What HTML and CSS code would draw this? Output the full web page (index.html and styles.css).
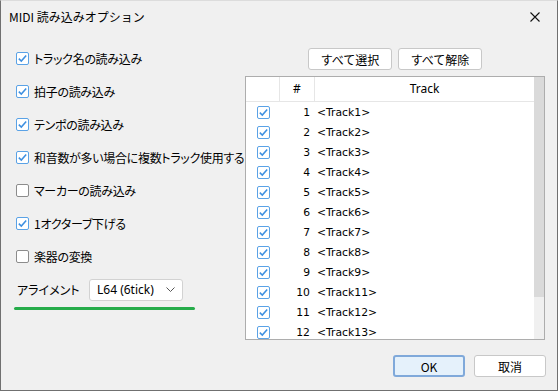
FILE: index.html
```html
<!DOCTYPE html>
<html lang="ja">
<head>
  <meta charset="UTF-8">
  <title>MIDI 読み込みオプション</title>
  <link rel="stylesheet" href="styles.css">
</head>
<body>
<div class="dialogo">
  <div class="titulo">
    <span>MIDI 読み込みオプション</span>
    <svg class="fechar" width="10" height="10" viewBox="0 0 10 10"><path d="M0.5 0.5L9.5 9.5M9.5 0.5L0.5 9.5" stroke="#111" stroke-width="1.1"/></svg>
  </div>

  <div class="corpo">
    <div class="opcoes">
      <label class="opcao"><span class="caixa marcada"><svg viewBox="0 0 11 11"><path d="M1.8 5.6L4.3 8.1L9.2 2.6"/></svg></span>トラック名の読み込み</label>
      <label class="opcao"><span class="caixa marcada"><svg viewBox="0 0 11 11"><path d="M1.8 5.6L4.3 8.1L9.2 2.6"/></svg></span>拍子の読み込み</label>
      <label class="opcao"><span class="caixa marcada"><svg viewBox="0 0 11 11"><path d="M1.8 5.6L4.3 8.1L9.2 2.6"/></svg></span>テンポの読み込み</label>
      <label class="opcao"><span class="caixa marcada"><svg viewBox="0 0 11 11"><path d="M1.8 5.6L4.3 8.1L9.2 2.6"/></svg></span>和音数が多い場合に複数トラック使用する</label>
      <label class="opcao"><span class="caixa"></span>マーカーの読み込み</label>
      <label class="opcao"><span class="caixa marcada"><svg viewBox="0 0 11 11"><path d="M1.8 5.6L4.3 8.1L9.2 2.6"/></svg></span>1オクターブ下げる</label>
      <label class="opcao"><span class="caixa"></span>楽器の変換</label>
      <div class="alinhamento">
        <span>アライメント</span>
        <div class="seletor">L64 (6tick)
          <svg width="9" height="5" viewBox="0 0 9 5"><path d="M0.5 0.5L4.5 4.5L8.5 0.5" fill="none" stroke="#555"/></svg>
        </div>
      </div>
      <div class="sublinhado"></div>
    </div>

    <div class="faixas">
      <div class="acoes">
        <button class="botao">すべて選択</button>
        <button class="botao">すべて解除</button>
      </div>
      <div class="tabela">
        <div class="lista">
          <div class="cabecalho">
            <div class="c1"></div>
            <div class="c2">#</div>
            <div class="c3">Track</div>
          </div>
          <div class="linha"><div class="c1"><span class="caixa marcada"><svg viewBox="0 0 11 11"><path d="M1.8 5.6L4.3 8.1L9.2 2.6"/></svg></span></div><div class="c2">1</div><div class="c3">&lt;Track1&gt;</div></div>
          <div class="linha"><div class="c1"><span class="caixa marcada"><svg viewBox="0 0 11 11"><path d="M1.8 5.6L4.3 8.1L9.2 2.6"/></svg></span></div><div class="c2">2</div><div class="c3">&lt;Track2&gt;</div></div>
          <div class="linha"><div class="c1"><span class="caixa marcada"><svg viewBox="0 0 11 11"><path d="M1.8 5.6L4.3 8.1L9.2 2.6"/></svg></span></div><div class="c2">3</div><div class="c3">&lt;Track3&gt;</div></div>
          <div class="linha"><div class="c1"><span class="caixa marcada"><svg viewBox="0 0 11 11"><path d="M1.8 5.6L4.3 8.1L9.2 2.6"/></svg></span></div><div class="c2">4</div><div class="c3">&lt;Track4&gt;</div></div>
          <div class="linha"><div class="c1"><span class="caixa marcada"><svg viewBox="0 0 11 11"><path d="M1.8 5.6L4.3 8.1L9.2 2.6"/></svg></span></div><div class="c2">5</div><div class="c3">&lt;Track5&gt;</div></div>
          <div class="linha"><div class="c1"><span class="caixa marcada"><svg viewBox="0 0 11 11"><path d="M1.8 5.6L4.3 8.1L9.2 2.6"/></svg></span></div><div class="c2">6</div><div class="c3">&lt;Track6&gt;</div></div>
          <div class="linha"><div class="c1"><span class="caixa marcada"><svg viewBox="0 0 11 11"><path d="M1.8 5.6L4.3 8.1L9.2 2.6"/></svg></span></div><div class="c2">7</div><div class="c3">&lt;Track7&gt;</div></div>
          <div class="linha"><div class="c1"><span class="caixa marcada"><svg viewBox="0 0 11 11"><path d="M1.8 5.6L4.3 8.1L9.2 2.6"/></svg></span></div><div class="c2">8</div><div class="c3">&lt;Track8&gt;</div></div>
          <div class="linha"><div class="c1"><span class="caixa marcada"><svg viewBox="0 0 11 11"><path d="M1.8 5.6L4.3 8.1L9.2 2.6"/></svg></span></div><div class="c2">9</div><div class="c3">&lt;Track9&gt;</div></div>
          <div class="linha"><div class="c1"><span class="caixa marcada"><svg viewBox="0 0 11 11"><path d="M1.8 5.6L4.3 8.1L9.2 2.6"/></svg></span></div><div class="c2">10</div><div class="c3">&lt;Track11&gt;</div></div>
          <div class="linha"><div class="c1"><span class="caixa marcada"><svg viewBox="0 0 11 11"><path d="M1.8 5.6L4.3 8.1L9.2 2.6"/></svg></span></div><div class="c2">11</div><div class="c3">&lt;Track12&gt;</div></div>
          <div class="linha"><div class="c1"><span class="caixa marcada"><svg viewBox="0 0 11 11"><path d="M1.8 5.6L4.3 8.1L9.2 2.6"/></svg></span></div><div class="c2">12</div><div class="c3">&lt;Track13&gt;</div></div>
        </div>
        <div class="rolagem"><div class="polegar"></div></div>
      </div>
    </div>
  </div>

  <div class="rodape">
    <button class="botao ok">OK</button>
    <button class="botao">取消</button>
  </div>
</div>
</body>
</html>
```

FILE: styles.css
```css
body { margin: 0; font-family: "Noto Sans CJK JP", "Noto Sans", sans-serif; font-size: 12px; color: #000; }
.dialogo { width: 558px; height: 391px; box-sizing: border-box; background: #f0f0f0; border: 1px solid #707070; border-top-color: #dcdcdc; display: flex; flex-direction: column; }
.titulo { height: 31px; display: flex; align-items: center; justify-content: space-between; padding: 0 17px 0 8px; }
.titulo span { font-size: 12px; }
.fechar { margin-top: 1px; }

.corpo { display: flex; height: 308px; }
.opcoes { width: 229px; padding: 10px 0 0 15px; }
.opcao { display: flex; align-items: center; height: 33px; font-size: 12px; font-feature-settings: "palt"; letter-spacing: -0.3px; white-space: nowrap; }
.opcao .caixa { margin-right: 5px; }

.caixa { width: 13px; height: 13px; box-sizing: border-box; border: 1px solid #8c8c8c; border-radius: 2px; background: #fff; display: inline-block; flex: none; }
.caixa.marcada { border-color: #5aa2e6; }
.caixa svg { display: block; width: 11px; height: 11px; }
.caixa svg path { fill: none; stroke: #3d8fe0; stroke-width: 1.5; }

.alinhamento { display: flex; align-items: center; height: 33px; padding-left: 1px; font-feature-settings: "palt"; }
.alinhamento span { width: 72px; }
.seletor { width: 94px; height: 22px; box-sizing: border-box; background: #fff; border: 1px solid #d2d2d2; border-radius: 3px; display: flex; align-items: center; justify-content: space-between; padding: 0 7px; font-family: "Noto Sans", sans-serif; font-size: 12px; }
.sublinhado { width: 181px; height: 3px; border-radius: 2px; background: #26ac4a; margin: 1px 0 0 -2px; }

.faixas { width: 300px; display: flex; flex-direction: column; }
.acoes { display: flex; gap: 6px; justify-content: center; margin: 16px 0 6px 0; }
.botao { height: 22px; width: 84px; background: #fff; border: 1px solid #c8c8c8; border-radius: 3px; font-family: "Noto Sans CJK JP", sans-serif; font-size: 12px; padding: 0; color: #000; }

.tabela { height: 264px; box-sizing: border-box; border: 1px solid #adadad; display: flex; background: #fff; overflow: hidden; }
.lista { width: 288px; }
.cabecalho { display: flex; height: 24px; border-bottom: 1px solid #e6e6e6; font-family: "Noto Sans", sans-serif; }
.cabecalho .c1, .cabecalho .c2 { border-right: 1px solid #e6e6e6; }
.cabecalho .c2 { text-align: center; padding: 0; width: 34px; }
.cabecalho .c3 { text-align: center; padding: 0; }
.cabecalho div { line-height: 24px; }
.c1 { width: 33px; flex: none; }
.c2 { width: 31px; padding-right: 3px; text-align: right; flex: none; }
.c3 { flex: 1; padding-left: 4px; }
.linha { display: flex; height: 20px; align-items: center; font-family: "DejaVu Sans", Verdana, sans-serif; font-size: 10.8px; }
.linha .c1 { padding-left: 11px; box-sizing: border-box; }
.linha .c1 .caixa { display: block; }

.rolagem { width: 10px; background: #f0f0f0; }
.polegar { height: 220px; background: #dadada; }

.rodape { display: flex; justify-content: flex-end; gap: 9px; padding: 15px 11px 0 0; }
.rodape .botao { width: 72px; height: 22px; }
.botao.ok { background: #e5f1fb; border: 2px solid #80a9da; }
```
